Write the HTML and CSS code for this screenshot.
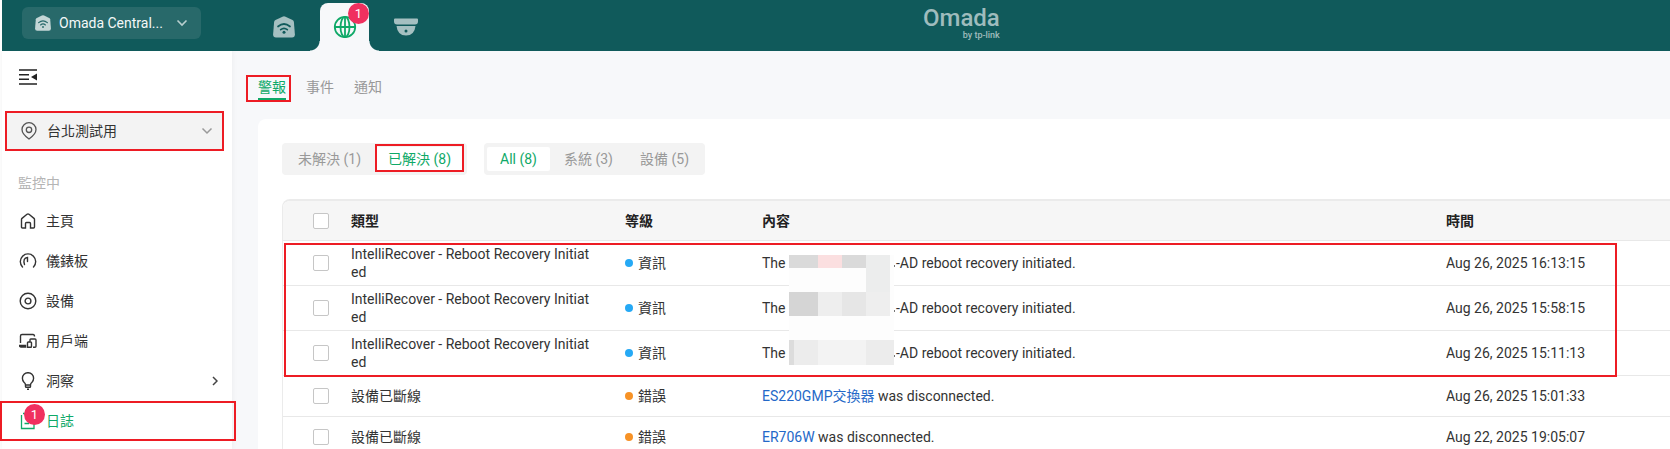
FILE: index.html
```html
<!DOCTYPE html>
<html lang="zh-Hant">
<head>
<meta charset="utf-8">
<meta name="viewport" content="width=device-width, initial-scale=1">
<title>Omada Central</title>
<link rel="stylesheet" href="styles.css">
</head>
<body>
<div class="app">
  <header class="topbar">
    <button class="org" type="button">
      <svg class="org-icon" width="16" height="16" viewBox="0 0 22 22"><path fill="#c3d6d6" d="M9.500 0.700Q11 0 12.500 0.700L19.500 4Q20.700 4.700 20.900 6L21.900 18.500Q21.900 21.500 19 21.500H3Q0.100 21.500 0.100 18.500L1.100 6Q1.300 4.700 2.500 4Z"/><g fill="none" stroke="#25686a" stroke-width="1.700" stroke-linecap="round"><path d="M5 10.500Q11 5.500 17 10.500"/><path d="M7.700 13.700Q11 11 14.300 13.700"/></g><circle cx="11" cy="16.500" r="1.300" fill="#25686a"/></svg>
      <span class="org-name">Omada Central...</span>
      <svg width="12" height="8" viewBox="0 0 12 8" fill="none" stroke="#b9cfcf" stroke-width="1.600"><path d="M1.500 1.500L6 6L10.500 1.500"/></svg>
    </button>
    <nav class="apps">
      <a class="app-tab" href="#" aria-label="Controller"><svg width="22" height="22" viewBox="0 0 22 22"><path fill="#a5c0c1" d="M9.500 0.700Q11 0 12.500 0.700L19.500 4Q20.700 4.700 20.900 6L21.900 18.500Q21.900 21.500 19 21.500H3Q0.100 21.500 0.100 18.500L1.100 6Q1.300 4.700 2.500 4Z"/><g fill="none" stroke="#105a5b" stroke-width="1.700" stroke-linecap="round"><path d="M5 10.500Q11 5.500 17 10.500"/><path d="M7.700 13.700Q11 11 14.300 13.700"/></g><circle cx="11" cy="16.300" r="1.500" fill="#105a5b"/></svg></a>
      <a class="app-tab app-tab-on" href="#" aria-label="Network"><svg width="24" height="24" viewBox="0 0 24 24" fill="none" stroke="#0fa968" stroke-width="1.800"><circle cx="12" cy="12" r="10.200"/><ellipse cx="12" cy="12" rx="4.500" ry="10.200"/><path d="M1.500 12H22.500M12 1.500V22.500"/></svg><span class="badge">1</span></a>
      <a class="app-tab" href="#" aria-label="Surveillance"><svg width="24" height="18" viewBox="0 0 24 18"><path fill="#a5c0c1" d="M1 0.500H23Q24 0.500 24 1.500V3.500Q24 6.500 21 6.500H3Q0 6.500 0 3.500V1.500Q0 0.500 1 0.500ZM2.500 8H21.500Q20.500 17.500 12 17.500Q3.500 17.500 2.500 8Z"/><circle cx="12" cy="13" r="1.500" fill="#105a5b"/></svg></a>
    </nav>
    <div class="logo"><span class="logo-name">Omada</span><span class="logo-by">by tp-link</span></div>
  </header>
  <div class="body">
    <aside class="sidebar">
      <button class="collapse" type="button" aria-label="Collapse"><svg width="18" height="16" viewBox="0 0 18 16"><path d="M0 1H18M0 5.700H10M0 10.300H10M0 15H18" stroke="#222" stroke-width="1.500"/><path d="M18 4.500V11.500L12 8Z" fill="#222"/></svg></button>
      <button class="site marked" type="button">
        <svg width="16" height="18" viewBox="0 0 16 18" fill="none" stroke="#555" stroke-width="1.300"><path d="M8 17Q1 12 1 7.500A7 6.800 0 0 1 15 7.500Q15 12 8 17Z"/><circle cx="8" cy="7.800" r="2.700"/></svg>
        <span class="site-name">台北測試用</span>
        <svg width="12" height="8" viewBox="0 0 12 8" fill="none" stroke="#999" stroke-width="1.500"><path d="M1.500 1.500L6 6L10.500 1.500"/></svg>
      </button>
      <div class="group">監控中</div>
      <nav class="menu">
        <a class="item" href="#"><svg class="item-icon" viewBox="0 0 18 18" fill="none" stroke="#333" stroke-width="1.400"><path d="M5.500 16H3.500Q2.500 16 2.500 15V7.500Q2.500 6.800 3 6.400L8 2.300Q9 1.600 10 2.300L15 6.400Q15.500 6.800 15.500 7.500V15Q15.500 16 14.500 16H11.500V11.500Q11.500 10.500 10.500 10.500H7.500Q6.500 10.500 6.500 11.500V16H5"/></svg><span>主頁</span></a>
        <a class="item" href="#"><svg class="item-icon" viewBox="0 0 18 18" fill="none" stroke="#333" stroke-width="1.400" stroke-linecap="round"><path d="M3.500 15A7.700 7.700 0 1 1 14.500 15"/><path d="M5.500 12.500Q3.500 6 8.500 5.500V9.500"/></svg><span>儀錶板</span></a>
        <a class="item" href="#"><svg class="item-icon" viewBox="0 0 18 18" fill="none" stroke="#333" stroke-width="1.400"><circle cx="9" cy="9" r="7.800"/><circle cx="9" cy="9" r="2.900"/></svg><span>設備</span></a>
        <a class="item" href="#"><svg class="item-icon" viewBox="0 0 18 18" fill="none" stroke="#333" stroke-width="1.400"><path d="M1.500 11V4Q1.500 2.500 3 2.500H14Q15.500 2.500 15.500 4.500M0.500 13.500H6.500V15H2Q0.500 15 0.500 13.500ZM8.500 15.300V10.800Q8.500 10 9.300 10H11.700Q12.500 10 12.500 10.800V14.500Q12.500 15.300 11.700 15.300ZM11 10V7.800Q11 7 11.800 7H16Q17 7 17 8V14.300Q17 15.300 16 15.300H14"/></svg><span>用戶端</span></a>
        <a class="item" href="#"><svg class="item-icon" viewBox="0 0 18 18" fill="none" stroke="#333" stroke-width="1.400"><path d="M6.500 13Q6.500 11.500 5 10.200A5.600 5.600 0 1 1 13 10.200Q11.500 11.500 11.500 13ZM6.500 13V14.500Q6.500 15.300 7.300 15.300H10.700Q11.500 15.300 11.500 14.500V13M8 17.300H10"/></svg><span class="item-text">洞察</span><svg class="more" width="6" height="10" viewBox="0 0 6 10" fill="none" stroke="#444" stroke-width="1.500"><path d="M1 1L5 5L1 9"/></svg></a>
        <a class="item item-on" href="#"><svg class="item-icon" viewBox="0 0 18 18" fill="none" stroke="#0fa968" stroke-width="1.300"><path d="M4 1.500H15V16.500H2.500V3M5.500 11.500H10"/></svg><span>日誌</span><span class="badge badge-menu">1</span></a>
      </nav>
    </aside>
    <main class="main">
      <nav class="tabs">
        <a class="tab tab-on" href="#">警報</a>
        <a class="tab" href="#">事件</a>
        <a class="tab" href="#">通知</a>
      </nav>
      <section class="card">
        <div class="filters">
          <div class="segments">
            <button class="segment" type="button">未解決 (1)</button>
            <button class="segment segment-on marked-segment" type="button">已解決 (8)</button>
          </div>
          <div class="segments">
            <button class="segment segment-on" type="button">All (8)</button>
            <button class="segment" type="button">系統 (3)</button>
            <button class="segment" type="button">設備 (5)</button>
          </div>
        </div>
        <div class="table-box">
          <table class="table">
            <colgroup><col class="col-check"><col class="col-type"><col class="col-level"><col><col class="col-time"></colgroup>
            <thead>
              <tr><th class="check"><input type="checkbox" aria-label="全選"></th><th>類型</th><th>等級</th><th>內容</th><th>時間</th></tr>
            </thead>
            <tbody>
              <tr class="tall"><td class="check"><input type="checkbox" aria-label="選擇"></td><td class="type">IntelliRecover - Reboot Recovery Initiated</td><td><span class="level info">資訊</span></td><td>The <span class="gap"></span>-AD reboot recovery initiated.</td><td>Aug 26, 2025 16:13:15</td></tr>
              <tr class="tall"><td class="check"><input type="checkbox" aria-label="選擇"></td><td class="type">IntelliRecover - Reboot Recovery Initiated</td><td><span class="level info">資訊</span></td><td>The <span class="gap"></span>-AD reboot recovery initiated.</td><td>Aug 26, 2025 15:58:15</td></tr>
              <tr class="tall"><td class="check"><input type="checkbox" aria-label="選擇"></td><td class="type">IntelliRecover - Reboot Recovery Initiated</td><td><span class="level info">資訊</span></td><td>The <span class="gap"></span>-AD reboot recovery initiated.</td><td>Aug 26, 2025 15:11:13</td></tr>
              <tr><td class="check"><input type="checkbox" aria-label="選擇"></td><td class="type">設備已斷線</td><td><span class="level error">錯誤</span></td><td><a href="#">ES220GMP交換器</a> was disconnected.</td><td>Aug 26, 2025 15:01:33</td></tr>
              <tr><td class="check"><input type="checkbox" aria-label="選擇"></td><td class="type">設備已斷線</td><td><span class="level error">錯誤</span></td><td><a href="#">ER706W</a> was disconnected.</td><td>Aug 22, 2025 19:05:07</td></tr>
            </tbody>
          </table>
          <svg class="mosaic" width="107" height="110" viewBox="0 0 107 110">
            <path fill="#fdfdfd" d="M0 0H105V110H0Z"/>
            <path fill="#dadada" d="M0 0H29V13H0ZM53 0H77V13H53Z"/><path fill="#fbdfe0" d="M29 0H53V13H29Z"/><path fill="#eceded" d="M77 0H101V37H77Z"/>
            <path fill="#d5d5d5" d="M0 37H29V61H0Z"/><path fill="#eeeeee" d="M29 37H53V61H29ZM77 37H101V61H77Z"/><path fill="#e6e6e6" d="M53 37H77V61H53Z"/>
            <path fill="#ececec" d="M0 85H29V110H0ZM77 85H105V110H77Z"/><path fill="#f3f3f3" d="M29 85H77V110H29Z"/><path fill="#dcdcdc" d="M0 85H5V110H0Z"/>
            <path fill="#777" d="M105 10H106V12H105ZM105 55H106V57H105ZM105 100H106V102H105Z"/>
          </svg>
          <div class="mark-rows"></div>
        </div>
      </section>
    </main>
  </div>
</div>
</body>
</html>
```
FILE: styles.css
```css
* { box-sizing: border-box; }
body {
  margin: 0;
  font: 14px/18px Roboto, "Noto Sans CJK TC", sans-serif;
  color: #333;
  background: #fff;
}
button { font: inherit; color: inherit; border: 0; background: none; padding: 0; margin: 0; }
a { text-decoration: none; color: #2468c8; }
svg { display: block; flex: none; }

.app { display: flex; flex-direction: column; height: 100vh; overflow: hidden; padding-left: 2px; }

.topbar { position: relative; display: flex; flex: none; height: 51px; background: #105a5b; }
.org { display: flex; align-items: center; width: 179px; height: 32px; margin: 7px 0 0 20px; padding: 0 13px 0 13px; border-radius: 6px; background: #28696a; color: #f4f8f8; }
.org-name { flex: 1; padding-left: 8px; text-align: left; white-space: nowrap; }
.apps { display: flex; gap: 12px; margin: 3px 0 0 58px; }
.app-tab { position: relative; display: flex; align-items: center; justify-content: center; width: 49px; height: 48px; }
.app-tab-on { background: #f7f8fa; border-radius: 8px 8px 0 0; }
.app-tab-on::before, .app-tab-on::after { content: ""; position: absolute; bottom: 0; width: 10px; height: 10px; }
.app-tab-on::before { right: 100%; background: radial-gradient(circle at 0 0, transparent 9px, #f7f8fa 10px); }
.app-tab-on::after { left: 100%; background: radial-gradient(circle at 100% 0, transparent 9px, #f7f8fa 10px); }
.badge { position: absolute; top: 0; right: 0; width: 21px; height: 21px; border-radius: 50%; background: #f0305f; color: #fff; font-size: 13px; line-height: 21px; text-align: center; }
.logo { position: absolute; right: 40%; top: 4px; display: flex; flex-direction: column; align-items: flex-end; padding: 2px 3px 0 0; color: #9fbcbd; }
.logo-name { font-size: 24px; line-height: 24px; font-weight: 500; }
.logo-by { font-size: 9px; line-height: 10px; font-weight: 500; }

.body { display: flex; flex: 1; min-height: 0; }
.sidebar { position: relative; z-index: 1; flex: none; width: 230px; background: #fff; box-shadow: 0 0 6px rgba(0, 0, 0, 0.06); clip-path: inset(0 -8px 0 -2px); }
.collapse { display: block; margin: 18px 0 0 17px; }
.site { display: flex; align-items: center; width: 219px; height: 40px; margin: 26px 0 0 3px; padding: 0 9px 0 14px; background: #f3f3f3; }
.marked { border: 2px solid #ed1c24; }
.site-name { flex: 1; padding-left: 10px; text-align: left; }
.group { margin: 22px 0 0 16px; line-height: 20px; color: #b5b5b5; }
.menu { margin-top: 8px; }
.item { position: relative; display: flex; align-items: center; gap: 9px; height: 40px; padding: 0 14px 0 17px; color: #333; }
.item-icon { width: 18px; height: 18px; }
.item-text { flex: 1; }
.item-on { margin: 0 -4px 0 -2px; border: 2px solid #ed1c24; color: #0fa968; }
.badge-menu { top: 1px; left: 22px; right: auto; }

.main { flex: 1; min-width: 0; padding: 24px 0 0 26px; background: #f7f8fa; }
.tabs { display: flex; gap: 20px; height: 44px; align-items: flex-start; }
.tab { position: relative; height: 25px; line-height: 24px; color: #999; }
.tab-on { color: #0fa968; border-bottom: 2px solid #0fa968; }
.tab-on::after { content: ""; position: absolute; left: -12px; right: -5px; top: 0; height: 23px; border: 2px solid #ed1c24; }
.card { padding: 24px 0 0 24px; background: #fff; border-radius: 8px 0 0 0; }
.filters { display: flex; gap: 17px; }
.segments { display: flex; gap: 1px; padding: 4px 3px; border-radius: 4px; background: #f3f3f3; }
.segment { position: relative; height: 24px; padding: 0 13px; border-radius: 2px; color: #999; white-space: nowrap; }
.segment-on { background: #fff; color: #0fa968; }
.marked-segment::after { content: ""; position: absolute; inset: -3px 0 -1px; border: 2px solid #ed1c24; }

.table-box { position: relative; margin-top: 24px; border: solid #ebebeb; border-width: 2px 0 0 1px; border-radius: 8px 0 0 0; overflow: hidden; }
.table { width: 100%; table-layout: fixed; border-collapse: separate; border-spacing: 0; }
.col-check { width: 68px; }
.col-type { width: 274px; }
.col-level { width: 137px; }
.col-time { width: 224px; }
.table th { height: 40px; padding: 0; text-align: left; font-weight: 700; color: #222; background: #f6f6f6; border-bottom: 1px solid #e8e8e8; }
.table td { height: 41px; padding: 0; border-bottom: 1px solid #e8e8e8; white-space: nowrap; }
.table .tall td { height: 45px; }
.table .type { padding-right: 32px; white-space: normal; word-break: break-all; }
.table .check { padding-left: 30px; }
.check input { display: block; appearance: none; width: 16px; height: 16px; margin: 0; border: 1px solid #c6c6c6; border-radius: 2px; background: #fff; }
.level { display: flex; align-items: center; gap: 5px; }
.level::before { content: ""; width: 8px; height: 8px; border-radius: 50%; }
.info::before { background: #26a9f5; }
.error::before { background: #f79226; }
.gap { display: inline-block; width: 107px; }
.mosaic { position: absolute; left: 506px; top: 54px; }
.mark-rows { position: absolute; left: 1px; right: 53px; top: 42px; height: 134px; border: 2px solid #ed1c24; }
```
